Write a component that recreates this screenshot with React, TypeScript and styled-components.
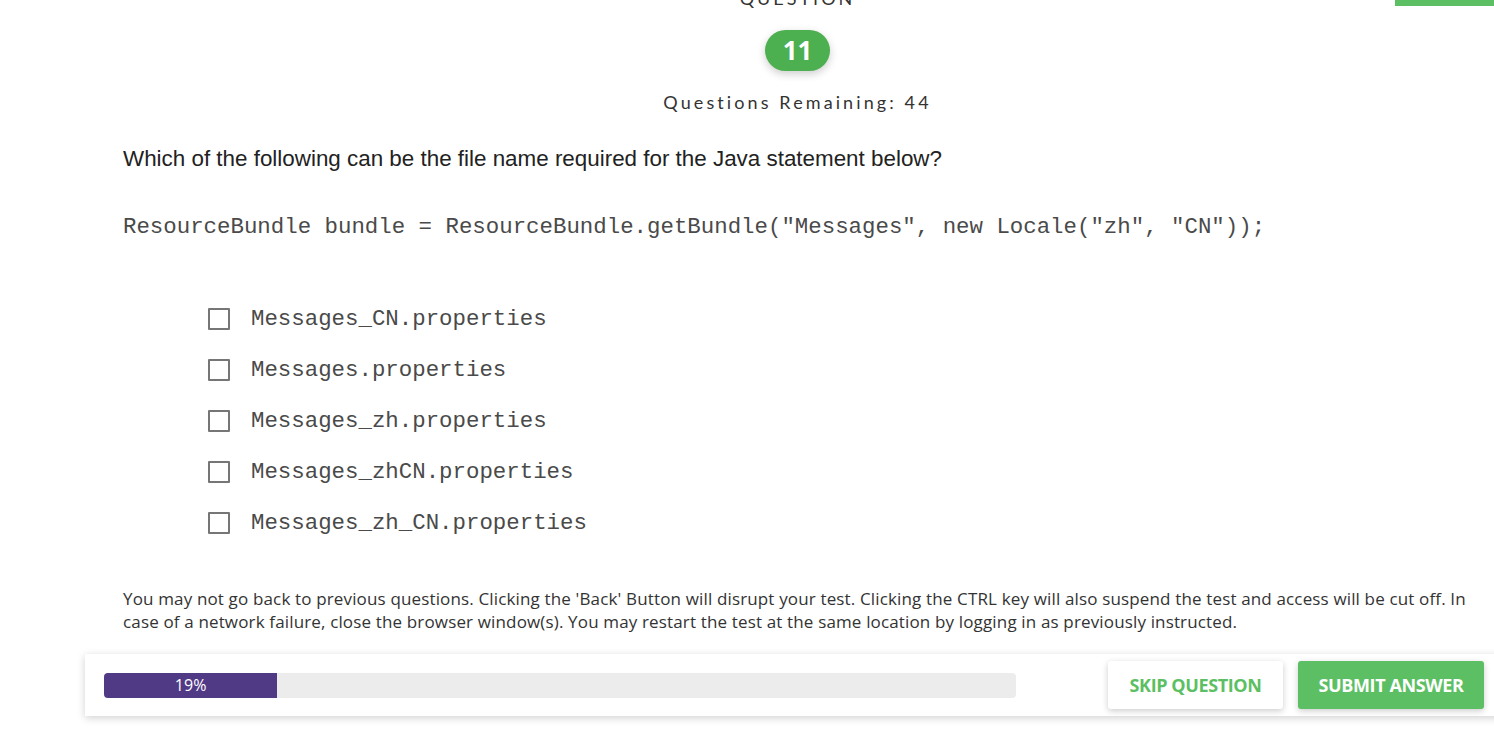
import React from "react";
import styled, { createGlobalStyle } from "styled-components";

const GlobalStyle = createGlobalStyle`
  html, body { margin: 0; padding: 0; background: #fff; }
  body { overflow: hidden; font-family: Lato, "Open Sans", sans-serif; color: #333; }
`;

const Page = styled.div`
  width: 1494px;
  height: 755px;
  overflow: hidden;
  display: flex;
  flex-direction: column;
`;

const TopStrip = styled.div`
  display: flex;
  justify-content: flex-end;
  height: 6px;
`;

const GreenTab = styled.div`
  width: 99px;
  height: 6px;
  background: #5cbf63;
`;

const Main = styled.main`
  padding: 0 18px 0 123px;
  display: flex;
  flex-direction: column;
`;

const Header = styled.header`
  margin: -20px 4px 0 0;
  display: flex;
  flex-direction: column;
  align-items: center;
`;

const Eyebrow = styled.div`
  font-family: Lato, sans-serif;
  font-size: 18px;
  line-height: 24px;
  letter-spacing: 3px;
  color: #333;
  text-transform: uppercase;
`;

const Badge = styled.div`
  margin-top: 20px;
  width: 65px;
  height: 41px;
  border-radius: 21px;
  background: #4caf50;
  color: #fff;
  font-family: "Open Sans", sans-serif;
  font-weight: 700;
  font-size: 26px;
  line-height: 41px;
  text-align: center;
  box-shadow: 0 3px 8px rgba(0, 0, 0, 0.2);
`;

const Remaining = styled.div`
  margin-top: 19px;
  font-family: Lato, sans-serif;
  font-size: 18px;
  line-height: 24px;
  letter-spacing: 3.1px;
  color: #333;
`;

const QuestionText = styled.p`
  margin: 32px 0 0;
  font-family: "Liberation Sans", Arial, sans-serif;
  font-size: 22.4px;
  line-height: 26px;
  color: #222;
`;

const Code = styled.pre`
  margin: 42px 0 0;
  font-family: "Liberation Mono", "Courier New", monospace;
  font-size: 22.4px;
  line-height: 26px;
  color: #4a4a4a;
`;

const Options = styled.ul`
  list-style: none;
  margin: 66px 0 0;
  padding: 0 0 0 85px;
  display: flex;
  flex-direction: column;
  gap: 25px;
`;

const Option = styled.li`
  display: flex;
  align-items: center;
  gap: 21px;
  height: 26px;
`;

const Box = styled.span`
  box-sizing: border-box;
  width: 22px;
  height: 22px;
  border: 2px solid #767676;
  border-radius: 1px;
  background: #fff;
`;

const OptionLabel = styled.span`
  font-family: "Liberation Mono", "Courier New", monospace;
  font-size: 22.4px;
  line-height: 26px;
  color: #4a4a4a;
`;

const Disclaimer = styled.p`
  margin: 51px 0 0;
  font-family: "Open Sans", sans-serif;
  font-size: 17px;
  line-height: 23px;
  letter-spacing: 0.15px;
  color: #333;
`;

const BottomBar = styled.div`
  margin: 21px 0 0 85px;
  width: 1424px;
  height: 62px;
  background: #fff;
  box-shadow: 0 2px 8px rgba(0, 0, 0, 0.18);
  display: flex;
  align-items: center;
  padding: 0 0 0 19px;
  box-sizing: border-box;
`;

const Progress = styled.div`
  width: 912px;
  height: 25px;
  background: #ececec;
  border-radius: 4px;
  overflow: hidden;
  display: flex;
`;

const ProgressFill = styled.div`
  height: 100%;
  background: #513a85;
  color: #fff;
  font-family: "Open Sans", sans-serif;
  font-size: 16px;
  line-height: 25px;
  text-align: center;
`;

const Buttons = styled.div`
  margin-left: 92px;
  display: flex;
  gap: 15px;
`;

const Button = styled.button<{ $primary?: boolean }>`
  height: 48px;
  padding: 0;
  width: ${(p) => (p.$primary ? "186px" : "175px")};
  border: none;
  border-radius: 3px;
  background: ${(p) => (p.$primary ? "#5cbf63" : "#fff")};
  color: ${(p) => (p.$primary ? "#fff" : "#5cbf63")};
  font-family: "Open Sans", sans-serif;
  font-weight: 700;
  font-size: 18px;
  letter-spacing: -0.4px;
  text-transform: uppercase;
  box-shadow: 0 2px 6px rgba(0, 0, 0, 0.2);
  cursor: pointer;
`;

const options = [
  "Messages_CN.properties",
  "Messages.properties",
  "Messages_zh.properties",
  "Messages_zhCN.properties",
  "Messages_zh_CN.properties",
];

export default function App() {
  const pct = 19;
  return (
    <>
      <GlobalStyle />
      <Page>
        <TopStrip>
          <GreenTab />
        </TopStrip>
        <Main>
          <Header>
            <Eyebrow>Question</Eyebrow>
            <Badge>11</Badge>
            <Remaining>Questions Remaining: 44</Remaining>
          </Header>
          <QuestionText>
            Which of the following can be the file name required for the Java statement below?
          </QuestionText>
          <Code>{'ResourceBundle bundle = ResourceBundle.getBundle("Messages", new Locale("zh", "CN"));'}</Code>
          <Options>
            {options.map((o) => (
              <Option key={o}>
                <Box />
                <OptionLabel>{o}</OptionLabel>
              </Option>
            ))}
          </Options>
          <Disclaimer>
            You may not go back to previous questions. Clicking the 'Back' Button will disrupt your test. Clicking the CTRL key will also suspend the test and access will be cut off. In case of a network failure, close the browser window(s). You may restart the test at the same location by logging in as previously instructed.
          </Disclaimer>
        </Main>
        <BottomBar>
          <Progress>
            <ProgressFill style={{ width: `${pct}%` }}>{pct}%</ProgressFill>
          </Progress>
          <Buttons>
            <Button>Skip Question</Button>
            <Button $primary>Submit Answer</Button>
          </Buttons>
        </BottomBar>
      </Page>
    </>
  );
}
